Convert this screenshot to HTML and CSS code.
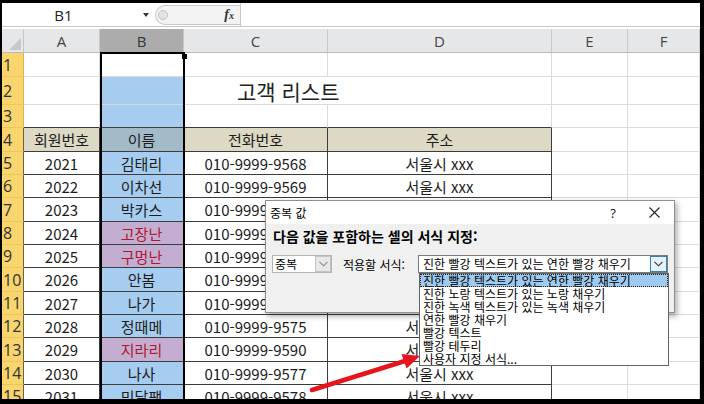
FILE: index.html
```html
<!DOCTYPE html>
<html lang="ko">
<head>
<meta charset="utf-8">
<title>중복 값</title>
<link rel="stylesheet" href="styles.css">
</head>
<body>
<div class="screen">
  <div class="fbar">
    <div class="namebox"><span class="nb-text">B1</span><span class="nb-arrow"></span></div>
    <div class="fpill"><span class="fdot"></span><span class="fx">f<span class="fxx">x</span></span></div>
    <div class="finput"></div>
  </div>

  <div class="sheet">
    <div class="corner"></div><div class="ch">A</div><div class="ch sel">B</div><div class="ch">C</div><div class="ch">D</div><div class="ch">E</div><div class="ch">F</div>

    <div class="rh">1</div><div class="c"></div><div class="c"></div><div class="c"></div><div class="c"></div><div class="c"></div><div class="c"></div>
    <div class="rh">2</div><div class="c"></div><div class="c bl"></div><div class="c title">고객 리스트</div><div class="c"></div><div class="c"></div>
    <div class="rh">3</div><div class="c tb"></div><div class="c bl tb"></div><div class="c tb"></div><div class="c tb"></div><div class="c"></div><div class="c"></div>
    <div class="rh rt">4</div><div class="c t th">회원번호</div><div class="c t bh">이름</div><div class="c t th">전화번호</div><div class="c t th">주소</div><div class="c"></div><div class="c"></div>
    <div class="rh rt">5</div><div class="c t">2021</div><div class="c t bl">김태리</div><div class="c t">010-9999-9568</div><div class="c t">서울시 xxx</div><div class="c"></div><div class="c"></div>
    <div class="rh rt">6</div><div class="c t">2022</div><div class="c t bl">이차선</div><div class="c t">010-9999-9569</div><div class="c t">서울시 xxx</div><div class="c"></div><div class="c"></div>
    <div class="rh rt">7</div><div class="c t">2023</div><div class="c t bl">박카스</div><div class="c t">010-9999-9570</div><div class="c t">서울시 xxx</div><div class="c"></div><div class="c"></div>
    <div class="rh rt">8</div><div class="c t">2024</div><div class="c t dup">고장난</div><div class="c t">010-9999-9571</div><div class="c t">서울시 xxx</div><div class="c"></div><div class="c"></div>
    <div class="rh rt">9</div><div class="c t">2025</div><div class="c t dup">구멍난</div><div class="c t">010-9999-9572</div><div class="c t">서울시 xxx</div><div class="c"></div><div class="c"></div>
    <div class="rh rt">10</div><div class="c t">2026</div><div class="c t bl">안봄</div><div class="c t">010-9999-9573</div><div class="c t">서울시 xxx</div><div class="c"></div><div class="c"></div>
    <div class="rh rt">11</div><div class="c t">2027</div><div class="c t bl">나가</div><div class="c t">010-9999-9574</div><div class="c t">서울시 xxx</div><div class="c"></div><div class="c"></div>
    <div class="rh rt">12</div><div class="c t">2028</div><div class="c t bl">정때메</div><div class="c t">010-9999-9575</div><div class="c t">서울시 xxx</div><div class="c"></div><div class="c"></div>
    <div class="rh rt">13</div><div class="c t">2029</div><div class="c t dup">지라리</div><div class="c t">010-9999-9590</div><div class="c t">서울시 xxx</div><div class="c"></div><div class="c"></div>
    <div class="rh rt">14</div><div class="c t">2030</div><div class="c t bl">나사</div><div class="c t">010-9999-9577</div><div class="c t">서울시 xxx</div><div class="c"></div><div class="c"></div>
    <div class="rh rt">15</div><div class="c t">2031</div><div class="c t bl">민달팽</div><div class="c t">010-9999-9578</div><div class="c t">서울시 xxx</div><div class="c"></div><div class="c"></div>
  </div>

  <div class="selbox"></div>
  <div class="handle"></div>

  <div class="dialog">
    <div class="dtitle">
      <span class="dt-name">중복 값</span>
      <span class="dt-help">?</span>
      <span class="dt-close"><svg width="11" height="11" viewBox="0 0 11 11"><path d="M0.5 0.5L10.5 10.5M10.5 0.5L0.5 10.5" stroke="#222" stroke-width="1.1" fill="none"/></svg></span>
    </div>
    <div class="dbody">
      <div class="dlabel">다음 값을 포함하는 셀의 서식 지정:</div>
      <div class="drow">
        <div class="combo combo1"><span class="ctext">중복</span><span class="cbtn"><svg width="9" height="6" viewBox="0 0 9 6"><path d="M0.5 0.8L4.5 4.8L8.5 0.8" stroke="#8a8a8a" stroke-width="1.1" fill="none"/></svg></span></div>
        <span class="dlab2">적용할 서식:</span>
        <div class="combo combo2"><span class="ctext">진한 빨강 텍스트가 있는 연한 빨강 채우기</span><span class="cbtn act"><svg width="9" height="6" viewBox="0 0 9 6"><path d="M0.5 0.8L4.5 4.8L8.5 0.8" stroke="#333" stroke-width="1.1" fill="none"/></svg></span></div>
      </div>
    </div>
    <ul class="dlist">
      <li class="hi">진한 빨강 텍스트가 있는 연한 빨강 채우기</li>
      <li>진한 노랑 텍스트가 있는 노랑 채우기</li>
      <li>진한 녹색 텍스트가 있는 녹색 채우기</li>
      <li>연한 빨강 채우기</li>
      <li>빨강 텍스트</li>
      <li>빨강 테두리</li>
      <li>사용자 지정 서식...</li>
    </ul>
  </div>

  <svg class="arrow" width="698" height="396" viewBox="0 0 698 396">
    <line x1="310" y1="387" x2="403" y2="358" stroke="#e8141c" stroke-width="4.5" stroke-linecap="round"/>
    <polygon points="418,353 404.5,365.5 399.5,351" fill="#e8141c"/>
  </svg>
</div>
</body>
</html>
```
FILE: styles.css
```css
html, body {
  margin: 0;
}
body {
  background: #000;
  padding: 3px 0 0 2px;
  height: 404px;
  box-sizing: border-box;
  overflow: hidden;
  font-family: "Noto Sans CJK KR", "Noto Sans", sans-serif;
}
.screen {
  position: relative;
  width: 698px;
  height: 396px;
  overflow: hidden;
  background: #fff;
}

/* formula bar */
.fbar {
  display: flex;
  height: 23px;
  border-bottom: 1px solid #c6c6c6;
  margin-bottom: 2px;
}
.namebox {
  width: 150px;
  display: flex;
  align-items: center;
}
.nb-text {
  width: 123px;
  text-align: center;
  font: 15px "Open Sans", sans-serif;
  color: #222;
}
.nb-arrow {
  margin-left: 18px;
  width: 0;
  height: 0;
  border-top: 4px solid #333;
  border-left: 3.5px solid transparent;
  border-right: 3.5px solid transparent;
}
.fpill {
  margin-left: 3px;
  margin-top: 2px;
  width: 85px;
  height: 20px;
  box-sizing: border-box;
  border: 1px solid #c9c9c9;
  border-right: none;
  border-radius: 11px 0 0 11px;
  background: #f3f3f3;
  display: flex;
  align-items: center;
}
.fdot {
  width: 8px;
  height: 8px;
  margin-left: 2px;
  border-radius: 50%;
  border: 1px solid #c2c2c2;
  background: #e4e4e4;
}
.fx {
  margin-left: auto;
  margin-right: 6px;
  font: italic bold 14px "Liberation Serif", serif;
  color: #333;
}
.fxx {
  font-size: 10px;
}
.finput {
  flex: 1;
  border-left: 1px solid #c9c9c9;
}

/* sheet grid */
.sheet {
  display: grid;
  grid-template-columns: 22px 76px 84px 144px 224px 76px 72px;
  grid-template-rows: 24px 24px 28px 23px 24px 23px 23px 24px 23px 23px 24px 23px 23px 24px 23px 23px;
}
.sheet > div {
  box-sizing: border-box;
  display: flex;
  align-items: center;
  justify-content: center;
  white-space: nowrap;
  overflow: hidden;
}
.corner {
  position: relative;
  background: #e6e7e9;
  border-right: 1px solid #c6c6c6;
  border-bottom: 1px solid #b9b9b9;
}
.corner::after {
  content: "";
  position: absolute;
  right: 2px;
  bottom: 2px;
  width: 0;
  height: 0;
  border-left: 12px solid transparent;
  border-bottom: 12px solid #c6c8cb;
}
.ch {
  background: #e6e7e9;
  border-right: 1px solid #c9c9c9;
  border-bottom: 1px solid #b9b9b9;
  font: 15px "Open Sans", sans-serif;
  color: #444;
}
.ch.sel {
  background: #acacac;
  color: #333;
  border-bottom-color: #8a8a8a;
}
.sheet > .rh {
  justify-content: flex-start;
  padding-left: 1px;
  background: #f9d56e;
  border-right: 1px solid #e0b347;
  border-bottom: 1px solid #ebc660;
  font: 16px "Open Sans", sans-serif;
  color: #333;
  overflow: visible;
}
.sheet > .rt {
  border-right-color: #6a6045;
}
.c {
  border-right: 1px solid #dadada;
  border-bottom: 1px solid #dadada;
  font-size: 15px;
  color: #1c1c1c;
}
.tb {
  border-bottom-color: #3c3c3c;
}
.t {
  border-right-color: #3c3c3c;
  border-bottom-color: #3c3c3c;
}
.th {
  background: #ddd9c4;
}
.bl {
  background: #a6cdef;
}
.bh {
  background: #a3bac8;
}
.dup {
  background: #c3aed1;
  color: #b3142f;
}
.sheet > .title {
  grid-column: span 2;
  justify-content: flex-start;
  padding-left: 53px;
  font-size: 21px;
  color: #222;
}

/* selection overlay */
.selbox {
  position: absolute;
  left: 98px;
  top: 49px;
  width: 85px;
  height: 400px;
  box-sizing: border-box;
  border: 2px solid #000;
}
.handle {
  position: absolute;
  left: 180px;
  top: 51px;
  width: 5px;
  height: 5px;
  background: #000;
}

/* dialog */
.dialog {
  position: absolute;
  left: 263px;
  top: 197px;
  width: 410px;
  height: 113px;
  box-sizing: border-box;
  border: 1px solid #8f8f8f;
  background: #f0f0f0;
  box-shadow: 2px 3px 6px rgba(0, 0, 0, 0.35);
  font-size: 12px;
  color: #000;
}
.dtitle {
  height: 23px;
  background: #fff;
  display: flex;
  align-items: center;
  padding-left: 4px;
}
.dt-name {
  font-size: 12px;
}
.dt-help {
  margin-left: auto;
  width: 30px;
  margin-right: 6px;
  text-align: center;
  font: 13px "Noto Sans", sans-serif;
  color: #222;
}
.dt-close {
  width: 40px;
  display: flex;
  justify-content: center;
  align-items: center;
}
.dbody {
  padding: 3px 6px 0 7px;
}
.dlabel {
  font-weight: bold;
  font-size: 14px;
  line-height: 18px;
}
.drow {
  display: flex;
  align-items: center;
  margin-top: 10px;
  height: 18px;
}
.combo {
  height: 18px;
  box-sizing: border-box;
  background: #fff;
  display: flex;
  align-items: center;
}
.combo1 {
  width: 60px;
  margin-left: -1px;
  border: 1px solid #b4b4b4;
}
.combo2 {
  width: 250px;
  margin-left: auto;
  border: 1px solid #7a7a7a;
}
.ctext {
  padding-left: 2px;
  font-size: 12px;
  line-height: 16px;
  white-space: nowrap;
}
.combo2 .ctext {
  padding-left: 4px;
}
.cbtn {
  margin-left: auto;
  margin-right: 0;
  width: 16px;
  height: 16px;
  box-sizing: border-box;
  border: 1px solid #c4c4c4;
  background: #e8e8e8;
  display: flex;
  align-items: center;
  justify-content: center;
}
.cbtn.act {
  width: 17px;
  border-color: #3c7fb1;
  background: #e5f1fb;
}
.dlab2 {
  margin-left: 11px;
  font-size: 12px;
}
.dlist {
  position: absolute;
  left: 153px;
  top: 72px;
  width: 250px;
  margin: 0;
  padding: 0;
  list-style: none;
  box-sizing: border-box;
  border: 1px solid #646464;
  background: #fff;
}
.dlist li {
  height: 13px;
  line-height: 13px;
  padding-left: 3px;
  font-size: 12px;
  white-space: nowrap;
}
.dlist li.hi {
  background: #9fcbf0;
  outline: 1px dotted #222;
  outline-offset: -1px;
}

/* red arrow */
.arrow {
  position: absolute;
  left: 0;
  top: 0;
  pointer-events: none;
}
```
